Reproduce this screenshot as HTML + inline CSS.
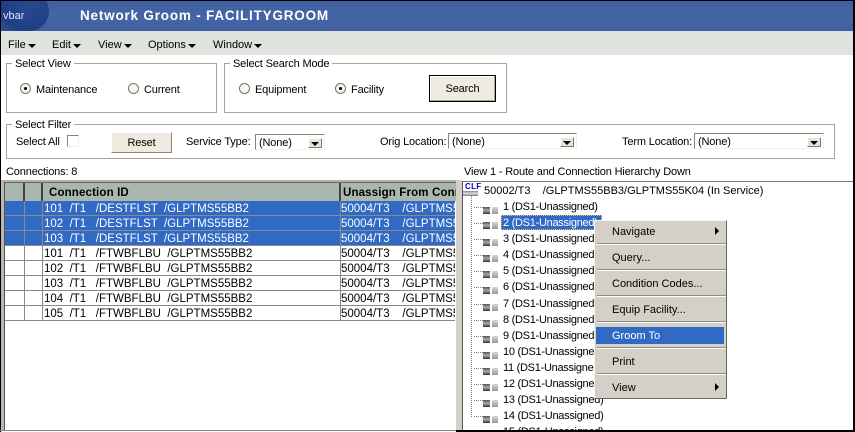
<!DOCTYPE html>
<html><head><meta charset="utf-8"><style>
html,body{margin:0;padding:0;background:#fff}
#p{position:relative;width:855px;height:432px;overflow:hidden;background:#fff;font:11px/14px "Liberation Sans",sans-serif;color:#000;letter-spacing:-.15px}
#p div,#p span.t{position:absolute;white-space:pre}
.t{position:absolute;white-space:pre}
.fs{border:1px solid #a8a596;box-sizing:border-box}
.lg{background:#fff;padding:0 3px;top:-7px}
.r{width:11px;height:11px;border-radius:50%;border:1px solid #77776c;background:#f8f6f0;box-sizing:border-box}
.r.on:after{content:"";position:absolute;left:3px;top:3px;width:3px;height:3px;background:#000;border-radius:50%}
.sel{height:16px;background:#fff;border:1px solid;border-color:#8a8778 #f2f0e8 #f2f0e8 #8a8778;box-sizing:border-box;line-height:15px;padding-left:3px;padding-top:1px}
.ab{right:2px;top:3px;width:14px;height:10px;background:#e6e3d8;border:1px solid;border-color:#fff #777 #777 #fff;box-sizing:border-box}
.ab:after{content:"";position:absolute;left:2px;top:3px;border:4px solid transparent;border-top:4px solid #000;border-bottom:0}
.m{font-size:11px;letter-spacing:0}
.row{left:5px;width:450px;height:15px;border-bottom:1px solid #8a8a8a;box-sizing:border-box;line-height:14px;font-size:11.5px;letter-spacing:0}
.row.s{background:#316ac5;color:#fff}
.row .c0{left:19px;top:0;width:1px;height:15px;background:#8a8a8a}
.row .c1{left:37px;top:0;width:1px;height:15px;background:#8a8a8a}
.row .c2{left:335px;top:0;width:1px;height:15px;background:#8a8a8a}
.row .a{left:39px;top:1px}
.row .b{left:336px;top:1px;width:114px;overflow:hidden}
.tn{left:503px;height:14px;line-height:14px;letter-spacing:-.28px}
.dh{left:474px;width:9px;height:0;border-top:1px dotted #777}
.i1{left:483px;width:7px;height:7px;background:linear-gradient(#555,#aaa 50%,#333)}
.i2{left:492px;width:6px;height:7px;background:linear-gradient(#d8d8d8,#999);border:0}
.sp{left:2px;width:129px;height:2px;background:linear-gradient(#8f8d86 50%,#fff 50%)}
.mi{left:17px;letter-spacing:0}
</style></head><body><div id="p">

<div style="left:0;top:0;width:855px;height:31px;background:linear-gradient(#3f5f9f,#4565a6 60%,#3f5f9f)"></div>
<div style="left:0;top:-8px;width:49px;height:39px;border-radius:0 22px 22px 0;background:radial-gradient(circle at 60% 25%,#2a4a90,#1e3f86 70%,#35558f)"></div>
<span class="t" style="left:3px;top:9px;color:#dfe6f5;font-size:11px;letter-spacing:0">vbar</span>
<span class="t" style="left:80px;top:8px;color:#fff;font-size:13.5px;font-weight:bold;letter-spacing:.8px;line-height:15px">Network Groom - FACILITYGROOM</span>

<div style="left:0;top:31px;width:855px;height:24px;background:#dfe3dd"></div>
<span class="t m" style="left:8px;top:38px">File</span><div style="left:28px;top:44px;border:4px solid transparent;border-top:4px solid #000;border-bottom:0"></div>
<span class="t m" style="left:52px;top:38px">Edit</span><div style="left:73px;top:44px;border:4px solid transparent;border-top:4px solid #000;border-bottom:0"></div>
<span class="t m" style="left:98px;top:38px">View</span><div style="left:124px;top:44px;border:4px solid transparent;border-top:4px solid #000;border-bottom:0"></div>
<span class="t m" style="left:148px;top:38px">Options</span><div style="left:188px;top:44px;border:4px solid transparent;border-top:4px solid #000;border-bottom:0"></div>
<span class="t m" style="left:213px;top:38px">Window</span><div style="left:254px;top:44px;border:4px solid transparent;border-top:4px solid #000;border-bottom:0"></div>

<div class="fs" style="left:6px;top:63px;width:211px;height:50px"><span class="t lg" style="left:5px">Select View</span></div>
<div class="r on" style="left:20px;top:83px"></div><span class="t" style="left:36px;top:83px">Maintenance</span>
<div class="r" style="left:128px;top:83px"></div><span class="t" style="left:144px;top:83px">Current</span>

<div class="fs" style="left:224px;top:63px;width:283px;height:50px"><span class="t lg" style="left:5px">Select Search Mode</span></div>
<div class="r" style="left:239px;top:83px"></div><span class="t" style="left:255px;top:83px">Equipment</span>
<div class="r on" style="left:335px;top:83px"></div><span class="t" style="left:351px;top:83px">Facility</span>
<div style="left:429px;top:75px;width:67px;height:27px;background:#efebe0;border:1px solid #000;box-sizing:border-box;box-shadow:inset -1px -1px 0 #a8a596,inset 1px 1px 0 #fff;text-align:center;line-height:26px">Search</div>

<div class="fs" style="left:6px;top:124px;width:829px;height:35px"><span class="t lg" style="left:5px">Select Filter</span></div>
<span class="t" style="left:16px;top:135px">Select All</span>
<div style="left:67px;top:135px;width:12px;height:12px;border:1px solid;border-color:#8a8778 #eee #eee #8a8778;box-sizing:border-box"></div>
<div style="left:111px;top:132px;width:61px;height:21px;background:#efebe0;box-sizing:border-box;border:1px solid;border-color:#fff #8a8778 #8a8778 #fff;text-align:center;line-height:20px">Reset</div>
<span class="t" style="left:186px;top:135px">Service Type:</span>
<div class="sel" style="left:255px;top:134px;width:70px">(None)<div class="ab"></div></div>
<span class="t" style="left:380px;top:135px">Orig Location:</span>
<div class="sel" style="left:448px;top:133px;width:129px">(None)<div class="ab"></div></div>
<span class="t" style="left:622px;top:135px">Term Location:</span>
<div class="sel" style="left:694px;top:133px;width:130px">(None)<div class="ab"></div></div>

<span class="t" style="left:6px;top:165px">Connections: 8</span>
<span class="t" style="left:464px;top:165px">View 1 - Route and Connection Hierarchy Down</span>

<div style="left:0;top:180px;width:462px;height:2px;background:#b0b0a8"></div>
<div style="left:3px;top:182px;width:453px;height:19px;background:#a9b7ae;border-top:1px solid #666;box-sizing:border-box"></div>
<div style="left:4px;top:182px;width:1px;height:248px;background:#555"></div>
<div style="left:1px;top:182px;width:3px;height:248px;background:#b8b8b0"></div>
<div style="left:23px;top:183px;width:2px;height:18px;background:#444"></div>
<div style="left:41px;top:183px;width:2px;height:18px;background:#444"></div>
<div style="left:339px;top:183px;width:2px;height:18px;background:#444"></div>
<span class="t" style="left:49px;top:186px;font-weight:bold;font-size:11.5px;letter-spacing:.15px">Connection ID</span>
<div style="left:341px;top:183px;width:115px;height:18px;overflow:hidden"><span class="t" style="left:2px;top:3px;font-weight:bold;font-size:11.5px;letter-spacing:.15px">Unassign From Connection</span></div>

<div class="row s" style="top:201px"><div class="c0"></div><div class="c1"></div><div class="c2"></div><span class="t a">101  /T1   /DESTFLST  /GLPTMS55BB2</span><span class="t b">50004/T3    /GLPTMS55BB3</span></div>
<div class="row s" style="top:216px"><div class="c0"></div><div class="c1"></div><div class="c2"></div><span class="t a">102  /T1   /DESTFLST  /GLPTMS55BB2</span><span class="t b">50004/T3    /GLPTMS55BB3</span></div>
<div class="row s" style="top:231px"><div class="c0"></div><div class="c1"></div><div class="c2"></div><span class="t a">103  /T1   /DESTFLST  /GLPTMS55BB2</span><span class="t b">50004/T3    /GLPTMS55BB3</span></div>
<div class="row" style="top:246px"><div class="c0"></div><div class="c1"></div><div class="c2"></div><span class="t a">101  /T1   /FTWBFLBU  /GLPTMS55BB2</span><span class="t b">50004/T3    /GLPTMS55BB3</span></div>
<div class="row" style="top:261px"><div class="c0"></div><div class="c1"></div><div class="c2"></div><span class="t a">102  /T1   /FTWBFLBU  /GLPTMS55BB2</span><span class="t b">50004/T3    /GLPTMS55BB3</span></div>
<div class="row" style="top:276px"><div class="c0"></div><div class="c1"></div><div class="c2"></div><span class="t a">103  /T1   /FTWBFLBU  /GLPTMS55BB2</span><span class="t b">50004/T3    /GLPTMS55BB3</span></div>
<div class="row" style="top:291px"><div class="c0"></div><div class="c1"></div><div class="c2"></div><span class="t a">104  /T1   /FTWBFLBU  /GLPTMS55BB2</span><span class="t b">50004/T3    /GLPTMS55BB3</span></div>
<div class="row" style="top:306px"><div class="c0"></div><div class="c1"></div><div class="c2"></div><span class="t a">105  /T1   /FTWBFLBU  /GLPTMS55BB2</span><span class="t b">50004/T3    /GLPTMS55BB3</span></div>

<div style="left:456px;top:180px;width:6px;height:250px;background:#d4d0c8"></div>
<div style="left:462px;top:181px;width:391px;height:1px;background:#777"></div>
<div style="left:462px;top:181px;width:1px;height:249px;background:#555"></div>

<span class="t" style="left:465px;top:183px;font:bold 8px/8px 'Liberation Sans',sans-serif;color:#00c;letter-spacing:.3px">CLF</span>
<div style="left:463px;top:191px;width:15px;height:5px;background:linear-gradient(#888,#ddd 50%,#777)"></div>
<span class="t" style="left:484px;top:184px;letter-spacing:0">50002/T3    /GLPTMS55BB3/GLPTMS55K04 (In Service)</span>
<div style="left:471px;top:196px;width:0;height:221px;border-left:1px dotted #777"></div>

<div class="dh" style="top:207px"></div><div class="i1" style="top:207px"></div><div class="i2" style="top:207px"></div><span class="t tn" style="top:200px">1 (DS1-Unassigned)</span>
<div style="left:501px;top:215px;width:101px;height:15px;background:#316ac5;outline:1px dotted #e8c070;outline-offset:-1px"></div>
<div class="dh" style="top:223px"></div><div class="i1" style="top:222px"></div><div class="i2" style="top:222px"></div><span class="t tn" style="top:216px;color:#fff">2 (DS1-Unassigned)</span>
<div class="dh" style="top:239px"></div><div class="i1" style="top:239px"></div><div class="i2" style="top:239px"></div><span class="t tn" style="top:232px">3 (DS1-Unassigned)</span>
<div class="dh" style="top:255px"></div><div class="i1" style="top:255px"></div><div class="i2" style="top:255px"></div><span class="t tn" style="top:248px">4 (DS1-Unassigned)</span>
<div class="dh" style="top:271px"></div><div class="i1" style="top:271px"></div><div class="i2" style="top:271px"></div><span class="t tn" style="top:264px">5 (DS1-Unassigned)</span>
<div class="dh" style="top:287px"></div><div class="i1" style="top:287px"></div><div class="i2" style="top:287px"></div><span class="t tn" style="top:280px">6 (DS1-Unassigned)</span>
<div class="dh" style="top:304px"></div><div class="i1" style="top:304px"></div><div class="i2" style="top:304px"></div><span class="t tn" style="top:297px">7 (DS1-Unassigned)</span>
<div class="dh" style="top:320px"></div><div class="i1" style="top:320px"></div><div class="i2" style="top:320px"></div><span class="t tn" style="top:313px">8 (DS1-Unassigned)</span>
<div class="dh" style="top:336px"></div><div class="i1" style="top:336px"></div><div class="i2" style="top:336px"></div><span class="t tn" style="top:329px">9 (DS1-Unassigned)</span>
<div class="dh" style="top:352px"></div><div class="i1" style="top:352px"></div><div class="i2" style="top:352px"></div><span class="t tn" style="top:345px">10 (DS1-Unassigned)</span>
<div class="dh" style="top:368px"></div><div class="i1" style="top:368px"></div><div class="i2" style="top:368px"></div><span class="t tn" style="top:361px">11 (DS1-Unassigned)</span>
<div class="dh" style="top:384px"></div><div class="i1" style="top:384px"></div><div class="i2" style="top:384px"></div><span class="t tn" style="top:377px">12 (DS1-Unassigned)</span>
<div class="dh" style="top:400px"></div><div class="i1" style="top:400px"></div><div class="i2" style="top:400px"></div><span class="t tn" style="top:393px">13 (DS1-Unassigned)</span>
<div class="dh" style="top:416px"></div><div class="i1" style="top:416px"></div><div class="i2" style="top:416px"></div><span class="t tn" style="top:409px">14 (DS1-Unassigned)</span>
<span class="t tn" style="top:425px">15 (DS1-Unassigned)</span>

<div style="left:594px;top:220px;width:133px;height:179px;background:#d4d0c8;box-sizing:border-box;border:1px solid;border-color:#f4f4f0 #666 #666 #f4f4f0">
<span class="t mi" style="top:4px">Navigate</span><div style="left:120px;top:6px;border:4px solid transparent;border-left:4px solid #000;border-right:0"></div>
<div class="sp" style="top:22px"></div>
<span class="t mi" style="top:30px">Query...</span>
<div class="sp" style="top:48px"></div>
<span class="t mi" style="top:56px">Condition Codes...</span>
<div class="sp" style="top:74px"></div>
<span class="t mi" style="top:82px">Equip Facility...</span>
<div class="sp" style="top:100px"></div>
<div style="left:1px;top:106px;width:128px;height:17px;background:#316ac5"></div>
<span class="t mi" style="top:108px;color:#fff">Groom To</span>
<div class="sp" style="top:126px"></div>
<span class="t mi" style="top:134px">Print</span>
<div class="sp" style="top:152px"></div>
<span class="t mi" style="top:160px">View</span><div style="left:120px;top:162px;border:4px solid transparent;border-left:4px solid #000;border-right:0"></div>
</div>

<div style="left:0;top:0;width:855px;height:1px;background:#000"></div>
<div style="left:0;top:0;width:1px;height:432px;background:#000"></div>
<div style="left:853px;top:0;width:2px;height:432px;background:#000"></div>
<div style="left:0;top:430px;width:456px;height:1px;background:#888"></div>
<div style="left:456px;top:430px;width:399px;height:2px;background:#000"></div>
</div></body></html>
